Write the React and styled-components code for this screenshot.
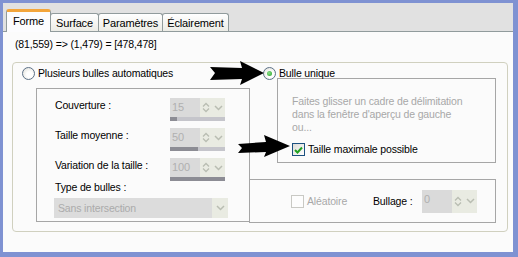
import styled, { createGlobalStyle } from "styled-components";

const Global = createGlobalStyle`
  html, body { margin: 0; padding: 0; background: #fff; }
  body {
    font-family: "Liberation Sans", Arial, sans-serif;
    font-size: 10.5px;
    letter-spacing: -0.15px;
    color: #000;
  }
`;

const Window = styled.div`
  position: relative;
  width: 518px;
  height: 257px;
  box-sizing: border-box;
  border: solid #7f92d2;
  border-width: 3px 5px 5px 3px;
  background: #e1e1e1;
  display: flex;
  flex-direction: column;
`;

const TabStrip = styled.div`
  height: 28px;
  flex: none;
  display: flex;
  align-items: flex-end;
  padding-left: 3px;
`;

const Tab = styled.div`
  position: relative;
  z-index: ${({ $active }) => ($active ? 2 : 1)};
  box-sizing: border-box;
  width: ${({ $w }) => $w}px;
  height: ${({ $active }) => ($active ? 23 : 18)}px;
  margin-bottom: ${({ $active }) => ($active ? -1 : 0)}px;
  margin-left: ${({ $active }) => ($active ? 0 : -1)}px;
  border: 1px solid #919b9c;
  border-bottom: none;
  border-top: ${({ $active }) => ($active ? "3px solid #f3a53b" : "1px solid #919b9c")};
  border-radius: 3px 3px 0 0;
  background: ${({ $active }) => ($active ? "#fcfcfe" : "linear-gradient(#ffffff, #ececE6)")};
  display: flex;
  align-items: center;
  justify-content: center;
  font-size: 11px;
  padding-bottom: ${({ $active }) => ($active ? 3 : 0)}px;
`;

const Panel = styled.div`
  flex: 1;
  background: #fbfbfb;
  border-top: 1px solid #919b9c;
  display: flex;
  flex-direction: column;
`;

const Coords = styled.div`
  margin: 5px 0 0 12px;
  line-height: 14px;
`;

const GroupBox = styled.div`
  margin: 11px 5px 0 9px;
  height: 170px;
  box-sizing: border-box;
  border: 1px solid #d0d0bf;
  border-radius: 4px;
  display: flex;
`;

const LeftCol = styled.div`
  width: 237px;
  padding: 3px 0 0 9px;
  box-sizing: border-box;
`;

const RightCol = styled.div`
  flex: 1;
  padding-top: 3px;
`;

const OptionRow = styled.label`
  display: flex;
  align-items: center;
  gap: 3px;
  height: 14px;
  line-height: 14px;
  padding-left: ${({ $indent }) => $indent || 0}px;
  color: ${({ $disabled }) => ($disabled ? "#a8a8a8" : "#000")};
`;

const Radio = styled.span`
  width: 13px;
  height: 13px;
  box-sizing: border-box;
  border-radius: 50%;
  border: 1px solid #5c7087;
  background: radial-gradient(circle at 60% 60%, #ffffff 30%, #dcdcd4);
  display: flex;
  align-items: center;
  justify-content: center;
  flex: none;
  &::after {
    content: "";
    display: ${({ $on }) => ($on ? "block" : "none")};
    width: 5px;
    height: 5px;
    border-radius: 50%;
    background: radial-gradient(circle at 40% 40%, #8ee08e, #21a121);
  }
`;

const Check = styled.span`
  width: 13px;
  height: 13px;
  box-sizing: border-box;
  border: 1px solid ${({ $disabled }) => ($disabled ? "#c9c9c4" : "#1c5180")};
  background: ${({ $disabled }) => ($disabled ? "#fdfdfd" : "linear-gradient(135deg, #dcdcd7, #ffffff)")};
  display: flex;
  align-items: center;
  justify-content: center;
  flex: none;
`;

const Fieldset = styled.div`
  margin: 8px 0 0 14px;
  width: 214px;
  height: 134px;
  box-sizing: border-box;
  border: 1px solid #a6a6a6;
  padding: 9px 0 0 18px;
`;

const SpinRow = styled.div`
  display: grid;
  grid-template-columns: 115px 55px;
  margin-bottom: 7px;
`;

const FieldLabel = styled.div`
  line-height: 14px;
`;

const SpinBox = styled.div`
  width: 55px;
  height: 23px;
  display: flex;
  flex-direction: column;
`;

const SpinTop = styled.div`
  flex: 1;
  display: flex;
`;

const SpinField = styled.div`
  flex: 1;
  background: #dadada;
  color: #b0b0b0;
  padding: 2px 0 0 2px;
  line-height: 14px;
  font-size: 11px;
`;

const SpinButton = styled.div`
  width: ${({ $w }) => $w}px;
  background: #e9ebe2;
  display: flex;
  align-items: center;
  justify-content: center;
`;

const SpinBar = styled.div`
  height: 4px;
  background: #c5c5cb;
  display: flex;
`;

const SpinFill = styled.div`
  background: #8c8c94;
`;

const TypeLabel = styled.div`
  line-height: 14px;
  margin-top: -8px;
`;

const Select = styled.div`
  margin: 4px 0 0 -1px;
  width: 174px;
  height: 20px;
  display: flex;
  background: #dcdcdc;
  color: #ababab;
`;

const SelectText = styled.div`
  flex: 1;
  padding: 3px 0 0 4px;
  line-height: 14px;
`;

const InfoBox = styled.div`
  margin: -2px 0 0 27px;
  width: 219px;
  height: 85px;
  box-sizing: border-box;
  border: 1px solid #a6a6a6;
  padding: 16px 0 0 14px;
`;

const Hint = styled.div`
  color: #a8a8a8;
  line-height: 13px;
`;

const CheckRow = styled.label`
  display: flex;
  align-items: center;
  gap: 3px;
  margin-top: ${({ $flush }) => ($flush ? 0 : 9)}px;
  line-height: 13px;
  color: ${({ $disabled }) => ($disabled ? "#a8a8a8" : "#000")};
`;

const BottomBox = styled.div`
  margin: 16px 0 0 -1px;
  width: 247px;
  height: 44px;
  box-sizing: border-box;
  border: 1px solid #a6a6a6;
  padding-left: 41px;
  display: grid;
  grid-template-columns: 82px 49px 55px;
  align-items: center;
`;

const Arrow = styled.svg`
  position: absolute;
  left: ${({ $x }) => $x}px;
  top: ${({ $y }) => $y}px;
  z-index: 5;
`;

const UpDown = () => (
  <svg width="8" height="11" viewBox="0 0 8 11">
    <path d="M1 4.5 L4 1.5 L7 4.5 M1 6.5 L4 9.5 L7 6.5" fill="none" stroke="#b9bdb2" strokeWidth="1.3" />
  </svg>
);

const Chevron = () => (
  <svg width="9" height="6" viewBox="0 0 9 6">
    <path d="M1 1 L4.5 4.5 L8 1" fill="none" stroke="#b9bdb2" strokeWidth="1.5" />
  </svg>
);

const Spin = ({ value, fill }) => (
  <SpinBox>
    <SpinTop>
      <SpinField>{value}</SpinField>
      <SpinButton $w={12}><UpDown /></SpinButton>
      <SpinButton $w={13}><Chevron /></SpinButton>
    </SpinTop>
    {fill != null && (
      <SpinBar>
        <SpinFill style={{ width: `${fill}%` }} />
      </SpinBar>
    )}
  </SpinBox>
);

const Tick = () => (
  <svg width="9" height="8" viewBox="0 0 9 8">
    <path d="M1 4 L3.5 6.5 L8 1.5" fill="none" stroke="#21a121" strokeWidth="2" />
  </svg>
);

const tabs = [
  { label: "Forme", w: 45, active: true },
  { label: "Surface", w: 49 },
  { label: "Paramètres", w: 65 },
  { label: "Éclairement", w: 67 },
];

const spins = [
  { label: "Couverture :", value: 15, fill: 13 },
  { label: "Taille moyenne :", value: 50, fill: 50 },
  { label: "Variation de la taille :", value: 100, fill: 100 },
];

export default function App() {
  return (
    <>
      <Global />
      <Window>
        <TabStrip>
          {tabs.map((t) => (
            <Tab key={t.label} $w={t.w} $active={t.active}>
              {t.label}
            </Tab>
          ))}
        </TabStrip>
        <Panel>
          <Coords>(81,559) =&gt; (1,479) = [478,478]</Coords>
          <GroupBox>
            <LeftCol>
              <OptionRow>
                <Radio />
                Plusieurs bulles automatiques
              </OptionRow>
              <Fieldset>
                {spins.map((s) => (
                  <SpinRow key={s.label}>
                    <FieldLabel>{s.label}</FieldLabel>
                    <Spin value={s.value} fill={s.fill} />
                  </SpinRow>
                ))}
                <TypeLabel>Type de bulles :</TypeLabel>
                <Select>
                  <SelectText>Sans intersection</SelectText>
                  <SpinButton $w={16}><Chevron /></SpinButton>
                </Select>
              </Fieldset>
            </LeftCol>
            <RightCol>
              <OptionRow $indent={13}>
                <Radio $on />
                Bulle unique
              </OptionRow>
              <InfoBox>
                <Hint>
                  Faites glisser un cadre de délimitation
                  <br />
                  dans la fenêtre d'aperçu de gauche
                  <br />
                  ou...
                </Hint>
                <CheckRow>
                  <Check><Tick /></Check>
                  Taille maximale possible
                </CheckRow>
              </InfoBox>
              <BottomBox>
                <CheckRow $disabled $flush>
                  <Check $disabled />
                  Aléatoire
                </CheckRow>
                <FieldLabel>Bullage :</FieldLabel>
                <Spin value={0} />
              </BottomBox>
            </RightCol>
          </GroupBox>
        </Panel>
        <Arrow $x={207} $y={58} width="54" height="24" viewBox="0 0 54 24">
          <path d="M0 6 L32 7 L30 0 L54 12 L30 24 L32 18 L0 19 L5 12 Z" fill="#000" />
        </Arrow>
        <Arrow $x={235} $y={132} width="52" height="22" viewBox="0 0 52 22">
          <path d="M0 9 L28 7 L26 0 L52 11 L26 22 L28 17 L0 18 L4 13 Z" fill="#000" />
        </Arrow>
      </Window>
    </>
  );
}
